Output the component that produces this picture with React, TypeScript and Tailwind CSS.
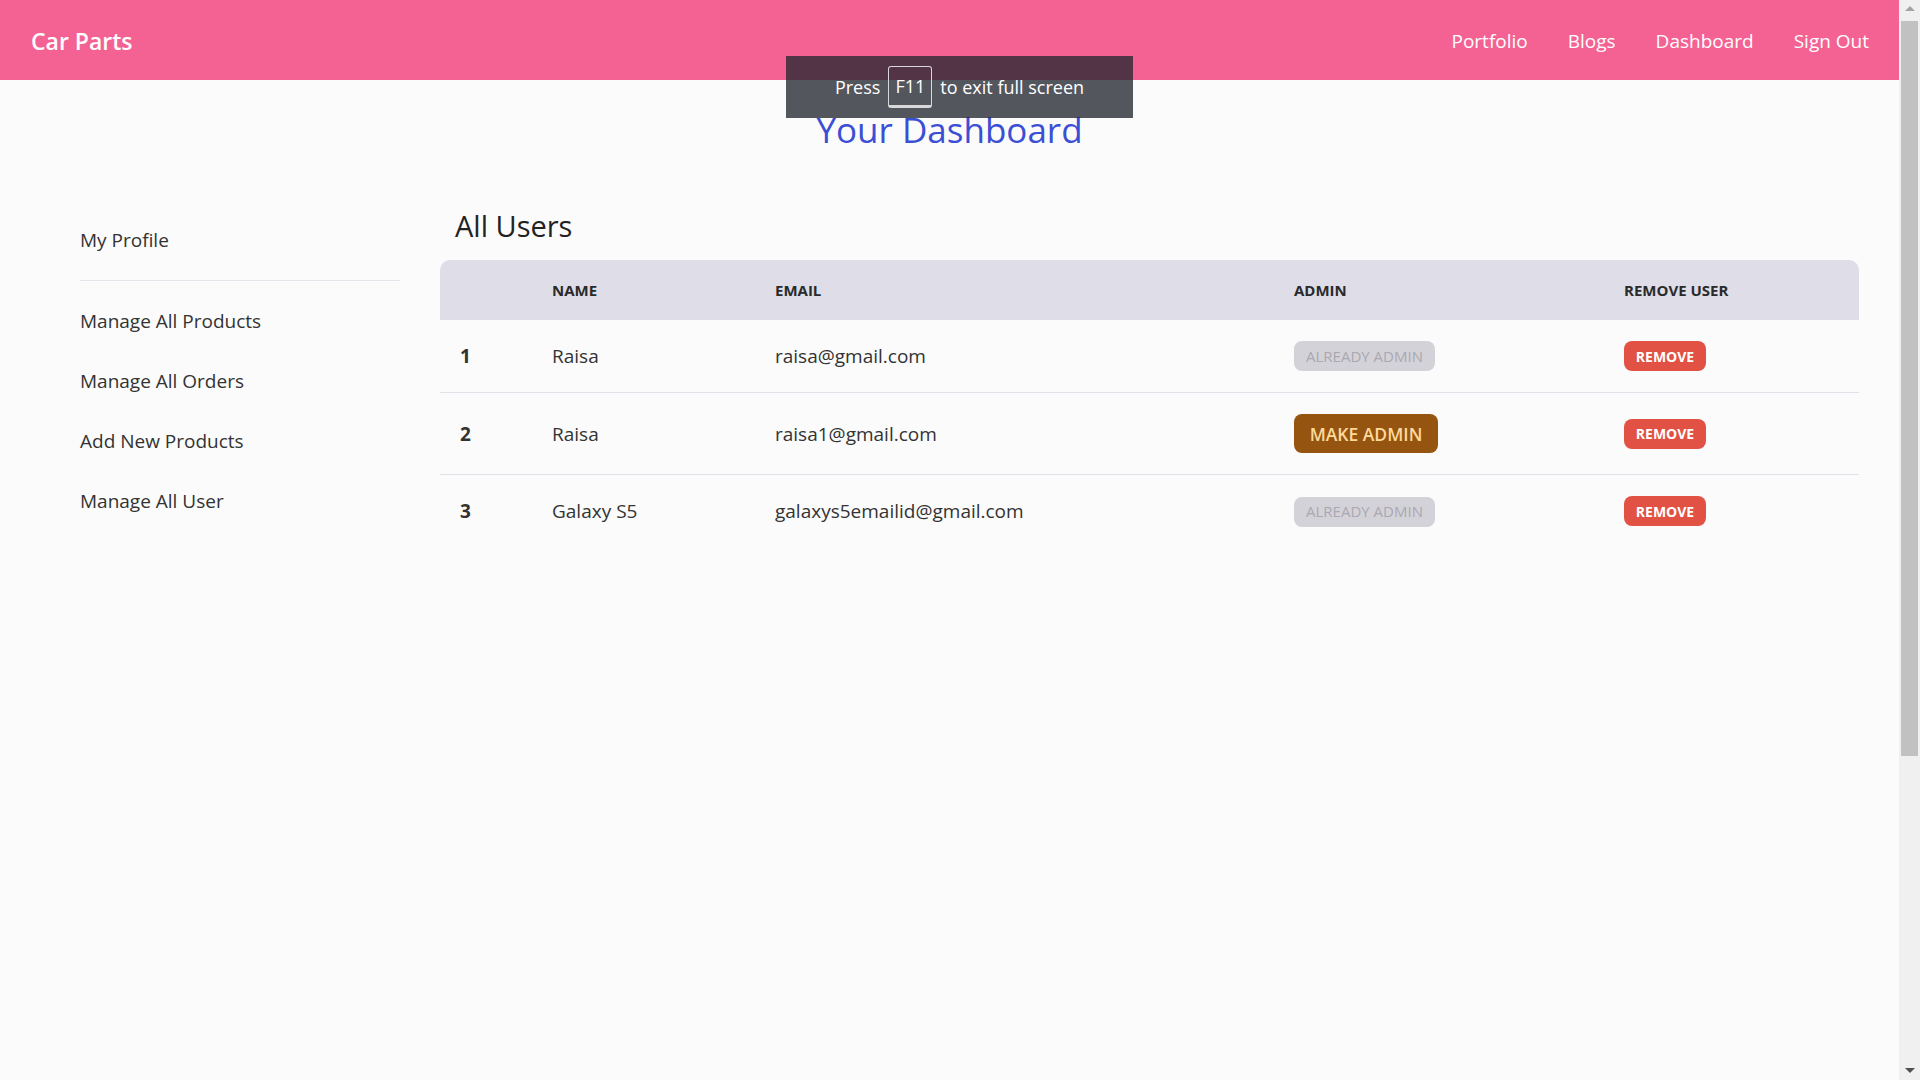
import React from "react";

const users = [
  { id: 1, name: "Raisa", email: "raisa@gmail.com", admin: true },
  { id: 2, name: "Raisa", email: "raisa1@gmail.com", admin: false },
  { id: 3, name: "Galaxy S5", email: "galaxys5emailid@gmail.com", admin: true },
];

const menu = ["Manage All Products", "Manage All Orders", "Add New Products", "Manage All User"];

function Scrollbar() {
  return (
    <div className="flex w-[21px] shrink-0 flex-col items-center bg-[#f0f0f0]">
      <div className="mt-[6px] h-0 w-0 border-x-[5px] border-b-[5px] border-x-transparent border-b-[#a3a3a3]" />
      <div className="mt-[10px] h-[735px] w-[17px] bg-[#c1c1c1]" />
      <div className="flex-1" />
      <div className="mb-[7px] h-0 w-0 border-x-[5px] border-t-[5px] border-x-transparent border-t-[#505050]" />
    </div>
  );
}

export default function App() {
  return (
    <div
      className="relative flex h-screen w-full overflow-hidden bg-[#fbfbfb] text-[#333333]"
      style={{ fontFamily: '"Open Sans", "Noto Sans", sans-serif' }}
    >
      <div className="flex min-w-0 flex-1 flex-col">
        {/* navbar */}
        <nav className="flex h-[80px] shrink-0 items-center justify-between bg-[#f46293] pl-[31px] pr-[30px] pt-[2px] text-white">
          <span className="text-[23px] font-semibold">Car Parts</span>
          <ul className="flex items-center gap-10 text-[19px]">
            <li>Portfolio</li>
            <li>Blogs</li>
            <li>Dashboard</li>
            <li>Sign Out</li>
          </ul>
        </nav>

        <h1 className="mt-[26px] text-center text-[35px] leading-[48px] text-[#3b4fd4]">
          Your Dashboard
        </h1>

        <div className="mt-[52px] flex">
          <aside className="ml-[80px] w-[320px] shrink-0 text-[19px] text-[#333]">
            <div className="pt-[20px] leading-[28px]">My Profile</div>
            <div className="mt-[26px] h-px bg-[#e4e4ea]" />
            <ul className="mt-[10px]">
              {menu.map((item) => (
                <li key={item} className="flex h-[60px] items-center">
                  {item}
                </li>
              ))}
            </ul>
          </aside>

          <main className="ml-[40px] mr-[40px] flex-1">
            <h2 className="pl-[15px] text-[29px] leading-[40px] text-[#222]">All Users</h2>
            <table className="mt-[14px] w-full table-fixed border-collapse text-left">
              <thead>
                <tr className="h-[60px] text-[15px] font-bold uppercase text-[#2a2a2a]">
                  <th className="w-[112px] rounded-tl-[10px] bg-[#dedde8] pl-[20px]"></th>
                  <th className="w-[223px] bg-[#dedde8]">Name</th>
                  <th className="w-[519px] bg-[#dedde8]">Email</th>
                  <th className="w-[330px] bg-[#dedde8]">Admin</th>
                  <th className="rounded-tr-[10px] bg-[#dedde8]">Remove User</th>
                </tr>
              </thead>
              <tbody className="text-[19px]">
                {users.map((u, i) => (
                  <tr
                    key={u.id}
                    className={i < users.length - 1 ? "border-b border-[#e2e2ea]" : ""}
                  >
                    <td className="py-[21px] pl-[20px] font-bold">{u.id}</td>
                    <td className="py-[21px]">{u.name}</td>
                    <td className="py-[21px]">{u.email}</td>
                    <td className="py-[21px]">
                      {u.admin ? (
                        <span className="inline-flex h-[30px] w-[141px] items-center justify-center rounded-[8px] bg-[#d4d2d9] text-[15px] uppercase text-[#aaa8b0]">
                          Already Admin
                        </span>
                      ) : (
                        <button className="flex h-[39px] w-[144px] items-center justify-center rounded-[8px] bg-[#955510] text-[17.5px] font-semibold uppercase text-[#fdd99b]">
                          Make Admin
                        </button>
                      )}
                    </td>
                    <td className="py-[21px]">
                      <button className="flex h-[30px] w-[82px] items-center justify-center rounded-[8px] bg-[#e25244] text-[14px] font-bold uppercase text-white">
                        Remove
                      </button>
                    </td>
                  </tr>
                ))}
              </tbody>
            </table>
          </main>
        </div>
      </div>

      <Scrollbar />

      {/* browser fullscreen notice */}
      <div className="absolute left-[786px] top-[56px] flex h-[62px] w-[347px] items-center justify-center gap-[8px] bg-[rgba(37,40,50,0.78)] text-[18px] text-white">
        <span>Press</span>
        <span className="flex h-[42px] w-[44px] items-center justify-center rounded-[3px] border border-b-[3px] border-[#d8d8d8]">
          F11
        </span>
        <span>to exit full screen</span>
      </div>
    </div>
  );
}
